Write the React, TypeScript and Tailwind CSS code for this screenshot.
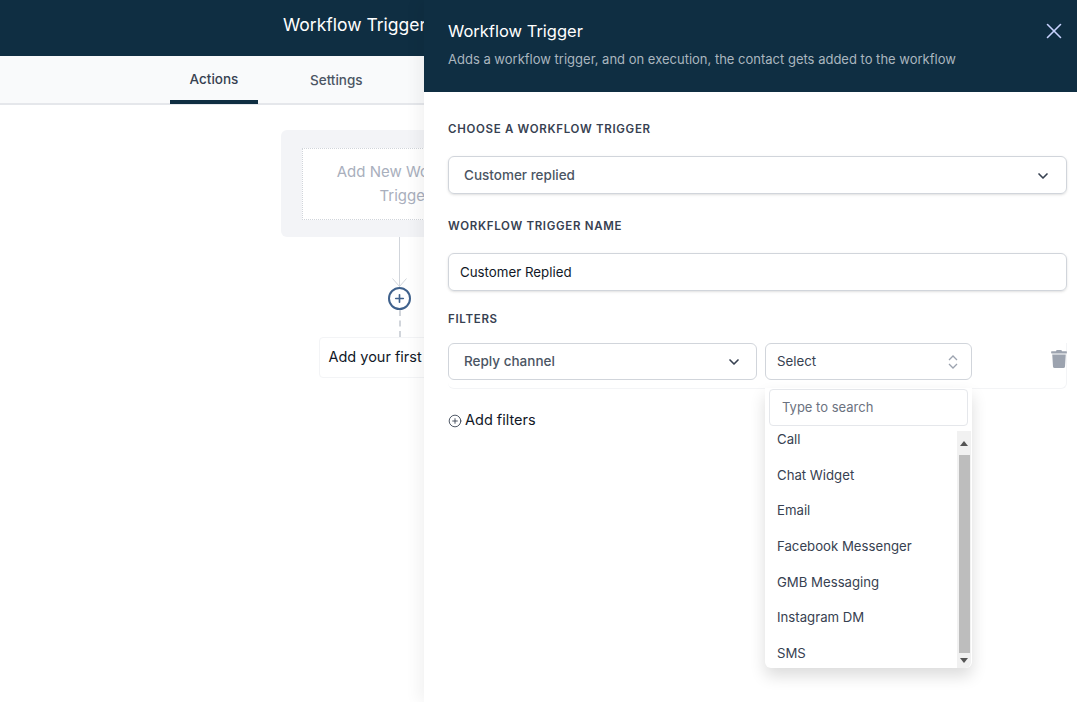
import { ChevronDown, Plus, PlusCircle, X } from "lucide-react"
import { FaTrash } from "react-icons/fa"

const channels = ["Call", "Chat Widget", "Email", "Facebook Messenger", "GMB Messaging", "Instagram DM", "SMS"]

function FieldLabel({ children }: { children: string }) {
  return <div className="pt-[2px] text-[11.5px] leading-[14px] font-semibold tracking-[0.06em] text-[#374151] uppercase">{children}</div>
}

function Canvas() {
  return (
    <div className="flex flex-col items-center w-[236px] ml-[281px] pt-[25px]">
      <div className="w-[236px] h-[107px] rounded-md bg-[#f3f4f7] flex items-center justify-center">
        <div className="w-[195px] h-[72px] bg-white border border-dotted border-[#d1d5db] pl-[12px] flex items-center justify-center text-center text-[15px] leading-6 text-[#a9afbd] whitespace-nowrap">
          <span>
            Add New Workflow
            <br />
            Trigger
          </span>
        </div>
      </div>
      <div className="relative w-px h-[50px] bg-[#d1d5db]">
        <svg className="absolute -left-[7px] bottom-0 w-[15px] h-[9px]" viewBox="0 0 15 9" fill="none" stroke="#d1d5db">
          <path d="M0.5 0.5L7.5 8.5L14.5 0.5" />
        </svg>
      </div>
      <div className="w-[23px] h-[23px] ml-px rounded-full border-[2px] border-[#3f618c] flex items-center justify-center bg-white">
        <Plus className="size-[13px] text-[#3f618c]" strokeWidth={3} />
      </div>
      <div className="h-[27px] ml-[2px] border-l-2 border-dashed border-[#d1d5db]" />
      <div className="w-[160px] h-[41px] rounded border border-[#f3f4f6] pb-[2px] flex items-center justify-center text-[14.5px] text-[#111827] whitespace-nowrap">
        Add your first Action
      </div>
    </div>
  )
}

function Dropdown() {
  return (
    <div className="absolute left-0 top-[45px] z-10 w-[207px] h-[280px] rounded-b-md bg-white shadow-[0_8px_16px_rgba(0,0,0,0.14)] flex flex-col">
      <div className="mx-1 mt-px h-[37px] shrink-0 rounded border border-[#e5e7eb] flex items-center px-3 text-[13px] text-[#6b7280]">
        Type to search
      </div>
      <div className="flex flex-1 min-h-0 mt-[5px]">
        <ul className="flex-1 pl-3 pt-px overflow-hidden">
          {channels.map((c) => (
            <li key={c} className="h-[35.7px] text-[13.2px] leading-[15px] text-[#374151]">{c}</li>
          ))}
        </ul>
        <div className="w-[14px] mr-px bg-[#f1f1f1] flex flex-col items-center rounded-br-md">
          <div className="h-[24px] flex items-center justify-center">
            <div className="border-x-[4px] border-x-transparent border-b-[5px] border-b-[#555]" />
          </div>
          <div className="w-[11px] flex-1 bg-[#bdbdbd]" />
          <div className="h-[15px] flex items-center justify-center">
            <div className="border-x-[4px] border-x-transparent border-t-[5px] border-t-[#555]" />
          </div>
        </div>
      </div>
    </div>
  )
}

function Drawer() {
  return (
    <div className="absolute left-[424px] top-0 w-[653px] h-[702px] bg-white shadow-[-6px_0_14px_rgba(0,0,0,0.05)] flex flex-col">
      <div className="h-[92px] shrink-0 bg-[#0f2e42] pl-6 pr-[10px] pt-[19px] flex justify-between">
        <div>
          <div className="text-[16.5px] leading-6 text-white">Workflow Trigger</div>
          <div className="mt-[7px] text-[13px] leading-[18px] text-[#aab6bf]">
            Adds a workflow trigger, and on execution, the contact gets added to the workflow
          </div>
        </div>
        <X className="size-[26px] -mt-[1px] text-[#c7d2fe]" strokeWidth={1.5} />
      </div>
      <div className="pl-6 pr-[10px] pt-[28px]">
        <FieldLabel>Choose a workflow trigger</FieldLabel>
        <div className="mt-[20px] h-[38px] rounded-md border border-[#d1d5db] shadow-sm pl-[15px] pr-[15px] pt-px flex items-center justify-between text-[13.5px] font-medium text-[#4b5563]">
          Customer replied
          <ChevronDown className="size-4 text-[#374151]" strokeWidth={2.5} />
        </div>
        <div className="mt-[23px]"><FieldLabel>Workflow trigger name</FieldLabel></div>
        <div className="mt-[20px] h-[38px] rounded-md border border-[#d1d5db] shadow-sm pl-[11px] pt-px flex items-center text-[13.3px] text-[#111827]">
          Customer Replied
        </div>
        <div className="mt-[19px]"><FieldLabel>Filters</FieldLabel></div>
        <div className="mt-[17px] flex items-start h-[46px] rounded-b-md border-b border-r border-[#f3f4f6]">
          <div className="w-[309px] h-[37px] rounded-md border border-[#d1d5db] pl-[15px] pr-[14px] flex items-center justify-between text-[13.5px] font-medium text-[#4b5563]">
            Reply channel
            <ChevronDown className="size-4 text-[#374151]" strokeWidth={2.5} />
          </div>
          <div className="relative ml-[8px] w-[207px]">
            <div className="h-[37px] rounded-md border border-[#d1d5db] pl-[11px] pr-[13px] flex items-center justify-between text-[13.3px] text-[#374151]">
              Select
              <svg className="w-[10px] h-[16px]" viewBox="0 0 10 16" fill="none" stroke="#9ca3af" strokeWidth="1.3">
                <path d="M1 6L5 2L9 6" />
                <path d="M1 10L5 14L9 10" />
              </svg>
            </div>
            <Dropdown />
          </div>
          <FaTrash className="ml-auto -mr-[2px] mt-[7px] size-[18px] text-[#9ca3af]" />
        </div>
        <div className="mt-[20px] flex items-center gap-[3px] text-[14.5px] text-[#111827]">
          <PlusCircle className="size-[14px] mt-[2px] text-[#374151]" strokeWidth={1.5} />
          Add filters
        </div>
      </div>
    </div>
  )
}

export default function App() {
  return (
    <div className="relative w-[1077px] h-[702px] overflow-hidden bg-white font-['Inter',sans-serif]">
      <div className="h-[56px] bg-[#0f2e42] pl-[283px] pt-[13px] text-[17.5px] leading-6 text-white whitespace-nowrap">
        Workflow Trigger
      </div>
      <div className="h-[49px] bg-[#f9fafb] border-b-2 border-[#e5e7eb] flex pl-[170px]">
        <div className="w-[88px] h-[48px] -mb-px border-b-4 border-[#0f2e42] pt-[2px] flex items-center justify-center text-[13.5px] font-medium text-[#374151]">
          Actions
        </div>
        <div className="ml-[52px] h-[49px] flex items-center text-[13.5px] font-medium text-[#4b5563]">Settings</div>
      </div>
      <Canvas />
      <Drawer />
    </div>
  )
}
